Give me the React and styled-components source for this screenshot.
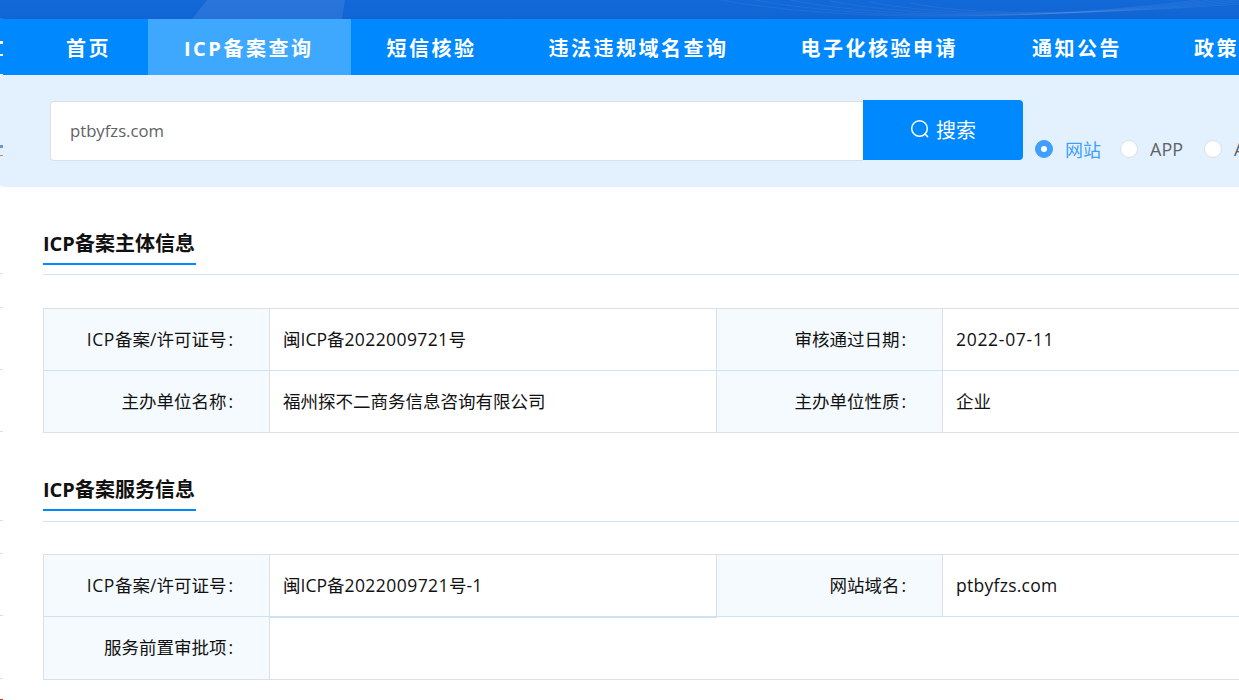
import React from 'react';
import styled, { createGlobalStyle } from 'styled-components';

const Global = createGlobalStyle`
  html, body { margin: 0; padding: 0; background: #fff; overflow: hidden; }
  body { font-family: "Open Sans", "Noto Sans CJK SC", sans-serif; }
  * { box-sizing: border-box; }
`;
const Page = styled.div`
  position: relative;
  width: 1239px;
  height: 700px;
  overflow: hidden;
  background: #fff;
`;
const Banner = styled.svg`
  display: block;
  width: 1239px;
  height: 19px;
`;
const Nav = styled.nav`
  display: flex;
  height: 56px;
  padding-left: 30px;
  background: #0088ff;
  white-space: nowrap;
`;
const NavItem = styled.a`
  flex: none;
  padding: 0 ${p => p.$pr || 36}px 0 ${p => p.$pl || 36}px;
  line-height: 60px;
  font-size: 20px;
  font-weight: 700;
  letter-spacing: 2.5px;
  color: #fff;
  background: ${p => (p.$active ? '#3ea8ff' : 'transparent')};
`;
const SearchPanel = styled.div`
  display: flex;
  align-items: flex-start;
  height: 112px;
  padding: 25px 0 0 50px;
  background: #e3f1ff;
  white-space: nowrap;
`;
const SearchInput = styled.div`
  flex: none;
  width: 813px;
  height: 60px;
  margin-top: 1px;
  padding-left: 19px;
  line-height: 58px;
  font-size: 16.7px;
  color: #606266;
  background: #fff;
  border: 1px solid #dcdfe6;
  border-right: none;
  border-radius: 4px 0 0 4px;
`;
const SearchButton = styled.button`
  flex: none;
  display: flex;
  align-items: center;
  justify-content: center;
  gap: 6px;
  width: 160px;
  height: 60px;
  padding: 0 0 2px;
  border: none;
  border-radius: 0 4px 4px 0;
  font: 400 20px "Noto Sans CJK SC", sans-serif;
  color: #fff;
  background: #0088ff;
`;
const RadioGroup = styled.div`
  flex: none;
  display: flex;
  align-items: center;
  height: 28px;
  margin: 35px 0 0 12px;
`;
const Radio = styled.label`
  display: flex;
  align-items: center;
  gap: 12px;
  margin-right: ${p => p.$mr || 20}px;
  font-size: 18px;
  color: ${p => (p.$checked ? '#409eff' : '#606266')};
`;
const RadioDot = styled.span`
  flex: none;
  display: flex;
  align-items: center;
  justify-content: center;
  width: 18px;
  height: 18px;
  border-radius: 50%;
  background: ${p => (p.$checked ? '#409eff' : '#fff')};
  border: 1px solid ${p => (p.$checked ? '#409eff' : '#dcdfe6')};
  &::after {
    content: '';
    width: 6px;
    height: 6px;
    border-radius: 50%;
    background: #fff;
    display: ${p => (p.$checked ? 'block' : 'none')};
  }
`;
const Content = styled.main`
  padding-left: 43px;
`;
const Section = styled.section`
  padding-top: 34px;
`;
const TitleBar = styled.div`
  height: ${p => p.$h}px;
  border-bottom: 1px solid #cfe4f5;
`;
const Title = styled.h2`
  display: inline-block;
  margin: 0;
  min-width: 153px;
  height: 44px;
  line-height: 46px;
  font-size: 20px;
  font-weight: 700;
  color: #111;
  border-bottom: 2px solid #0088ff;
`;
const InfoGrid = styled.div`
  display: grid;
  grid-template-columns: 226px 447px 226px 447px;
  grid-template-rows: ${p => p.$rows};
  width: 1346px;
  margin-top: ${p => p.$top}px;
  border-top: 1px solid #dcdfe6;
  border-left: 1px solid #dcdfe6;
  font-size: 17.5px;
  color: #111;
`;
const LabelCell = styled.div`
  padding-right: 36px;
  line-height: 60px;
  text-align: right;
  background: #f5fafe;
  border-right: 1px solid #dcdfe6;
  border-bottom: 1px solid ${p => (p.$last ? '#dcdfe6' : '#cfe2f3')};
  white-space: nowrap;
`;
const ValueCell = styled.div`
  position: relative;
  z-index: ${p => (p.$thick ? 1 : 0)};
  grid-column: span ${p => p.$span || 1};
  padding-left: 13px;
  line-height: 60px;
  background: #fff;
  border-right: ${p => (p.$span ? 'none' : '1px solid #dcdfe6')};
  border-bottom: 1px solid ${p => (p.$last ? '#dcdfe6' : '#cfe2f3')};
  box-shadow: ${p => (p.$thick ? '0 1px 0 #cfe2f3' : 'none')};
  white-space: nowrap;
`;
const Latin = styled.span`
  letter-spacing: ${p => p.$ls}px;
`;
const Colon = styled.span`
  margin-left: 2px;
`;
const EdgeRail = styled.div`
  position: absolute;
  z-index: 2;
  left: 0;
  top: 0;
  width: 3px;
  height: 700px;
  display: flex;
  flex-direction: column;
`;
const EdgeTick = styled.i`
  display: block;
  flex: none;
  height: ${p => p.$h || 1}px;
  margin-top: ${p => p.$gap}px;
  background: ${p => p.$c};
`;

const ticks = [
  [18, '#0088ff'], [22, '#fff', 3], [10, '#fff', 2], [18, '#fff'],
  [70, '#7d8fc8', 3], [7, '#c98a5a'], [30, '#fff'],
  [86, '#cfe4f5'], [33, '#dcdfe6'], [61, '#cfe2f3'], [61, '#dcdfe6'],
  [88, '#cfe4f5'], [32, '#dcdfe6'], [61, '#cfe2f3'], [62, '#dcdfe6'],
  [20, '#c0392b'],
];

const waves = [0, 1, 2, 3, 4, 5];

export default function App() {
  return (
    <Page>
      <Global />
      <Banner viewBox="0 0 1239 19" preserveAspectRatio="none">
        <defs>
          <linearGradient id="bannerFill" x1="0" y1="0" x2="0" y2="1">
            <stop offset="0" stopColor="#1369d8" />
            <stop offset="1" stopColor="#1264d4" />
          </linearGradient>
        </defs>
        <rect width="1239" height="19" fill="url(#bannerFill)" />
        <polygon points="192,19 207,0 345,0 342,19" fill="#fff" fillOpacity="0.09" />
        {waves.map(i => (
          <path
            key={i}
            d={`M${710 + i * 40} ${-2 + i} C ${830 + i * 30} ${22 - i}, ${1050 + i * 10} ${24 - i * 2}, 1239 ${-6 + i * 2}`}
            fill="none"
            stroke="#fff"
            strokeOpacity="0.06"
          />
        ))}
      </Banner>
      <Nav>
        <NavItem $pr={37}>首页</NavItem>
        <NavItem $active $pr={38}>ICP备案查询</NavItem>
        <NavItem $pl={35}>短信核验</NavItem>
        <NavItem>违法违规域名查询</NavItem>
        <NavItem $pr={38}>电子化核验申请</NavItem>
        <NavItem>通知公告</NavItem>
        <NavItem>政策文件</NavItem>
      </Nav>
      <SearchPanel>
        <SearchInput>ptbyfzs.com</SearchInput>
        <SearchButton>
          <svg width="20" height="20" viewBox="0 0 20 20" fill="none" stroke="#fff" strokeWidth="1.5">
            <circle cx="9.5" cy="9.5" r="7.8" />
            <path d="M15 15l2.6 2.6" strokeLinecap="round" />
          </svg>
          搜索
        </SearchButton>
        <RadioGroup>
          <Radio $checked $mr={19}><RadioDot $checked />网站</Radio>
          <Radio $mr={21}><RadioDot />APP</Radio>
          <Radio><RadioDot />APP</Radio>
        </RadioGroup>
      </SearchPanel>
      <Content>
        <Section>
          <TitleBar $h={54}><Title>ICP备案主体信息</Title></TitleBar>
        </Section>
        <InfoGrid $top={33} $rows="62px 62px">
          <LabelCell><Latin $ls={0.6}>ICP</Latin>备案/许可证号<Colon>:</Colon></LabelCell>
          <ValueCell>闽ICP备<Latin $ls={0.4}>2022009721</Latin>号</ValueCell>
          <LabelCell>审核通过日期<Colon>:</Colon></LabelCell>
          <ValueCell><Latin $ls={0.7}>2022-07-11</Latin></ValueCell>
          <LabelCell $last>主办单位名称<Colon>:</Colon></LabelCell>
          <ValueCell $last>福州探不二商务信息咨询有限公司</ValueCell>
          <LabelCell $last>主办单位性质<Colon>:</Colon></LabelCell>
          <ValueCell $last>企业</ValueCell>
        </InfoGrid>
        <Section>
          <TitleBar $h={55}><Title>ICP备案服务信息</Title></TitleBar>
        </Section>
        <InfoGrid $top={32} $rows="62px 63px">
          <LabelCell><Latin $ls={0.6}>ICP</Latin>备案/许可证号<Colon>:</Colon></LabelCell>
          <ValueCell $thick>闽ICP备<Latin $ls={0.45}>2022009721</Latin>号-1</ValueCell>
          <LabelCell>网站域名<Colon>:</Colon></LabelCell>
          <ValueCell><Latin $ls={0.27}>ptbyfzs.com</Latin></ValueCell>
          <LabelCell $last>服务前置审批项<Colon>:</Colon></LabelCell>
          <ValueCell $span={3} $last />
        </InfoGrid>
      </Content>
      <EdgeRail>
        {ticks.map(([gap, c, h], i) => (
          <EdgeTick key={i} $gap={gap} $c={c} $h={h} />
        ))}
      </EdgeRail>
    </Page>
  );
}
